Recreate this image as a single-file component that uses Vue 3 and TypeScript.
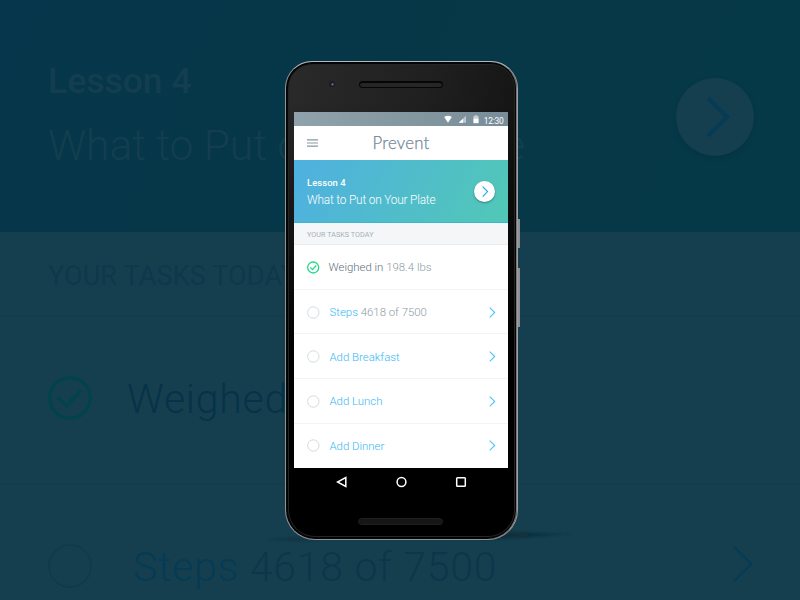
<script setup lang="ts">
interface Task {
  label: string
  detail?: string
  done?: boolean
}

const lesson = { number: 'Lesson 4', title: 'What to Put on Your Plate' }
const tasks: Task[] = [
  { label: 'Weighed in', detail: '198.4 lbs', done: true },
  { label: 'Steps', detail: '4618 of 7500' },
  { label: 'Add Breakfast' },
  { label: 'Add Lunch' },
  { label: 'Add Dinner' },
]
const backdropTasks = tasks.slice(0, 2)
</script>

<template>
  <main class="stage">
    <section class="backdrop" aria-hidden="true">
      <div class="bd-lesson">
        <div class="bd-copy">
          <div class="bd-number">{{ lesson.number }}</div>
          <div class="bd-title">{{ lesson.title }}</div>
        </div>
        <div class="bd-go">
          <svg width="78" height="78" viewBox="0 0 78 78"><path d="M32 20 51 39 32 58" fill="none" stroke="#053b54" stroke-width="4.2" /></svg>
        </div>
      </div>
      <div class="bd-sub">YOUR TASKS TODAY</div>
      <div v-for="task in backdropTasks" :key="task.label" class="bd-row" :class="{ done: task.done }">
        <svg class="bd-mark" width="44" height="44" viewBox="0 0 44 44" fill="none">
          <template v-if="task.done">
            <circle cx="22" cy="22" r="20.2" stroke="#00434a" stroke-width="3.2" />
            <path d="M9.8 21.2 18.5 30 33 14.2" stroke="#00434a" stroke-width="3.2" />
          </template>
          <circle v-else cx="22" cy="22" r="21" stroke="#12384a" stroke-width="1.5" />
        </svg>
        <div class="bd-label"><span>{{ task.label }}</span> {{ task.detail }}</div>
        <svg v-if="!task.done" class="bd-chev" width="20" height="38" viewBox="0 0 20 38"><path d="M1 1.5 18.3 19 1 36.5" fill="none" stroke="#053b54" stroke-width="2.2" /></svg>
      </div>
    </section>

    <svg class="floor" width="800" height="600" viewBox="0 0 800 600">
      <defs>
        <linearGradient id="fade"><stop offset="0" stop-color="#0a2630" /><stop offset="1" stop-color="#0a2630" stop-opacity=".35" /></linearGradient>
        <filter id="soft" x="-10%" y="-60%" width="120%" height="220%"><feGaussianBlur stdDeviation="1.2" /></filter>
      </defs>
      <path d="M480 530 520 532 573 534 535 537 480 540Z" fill="url(#fade)" opacity=".8" filter="url(#soft)" />
      <path d="M266 539.5 295 537 320 541 290 541Z" fill="#0b2c39" opacity=".45" filter="url(#soft)" />
    </svg>

    <div class="device">
      <div class="phone">
        <div class="top">
          <span class="camera"></span>
          <span class="speaker"></span>
        </div>
        <div class="screen">
          <div class="status">
            <svg width="32" height="9" viewBox="0 0 32 9" fill="#fff">
              <path d="M.2 2Q4-.4 7.8 2L4 7.8Z" />
              <path d="M22 .8V7.8H14.7Z" opacity=".5" />
              <path d="M19 3.7V7.8H14.7Z" />
            </svg>
            <svg class="battery" width="6" height="9" viewBox="0 0 6 9" fill="#fff"><path d="M1.7.3H4.3V1.3H5.6V3.4H.4V1.3H1.7Z" opacity=".6" /><path d="M.4 3.4H5.6V8.2H.4Z" /></svg>
            <span class="clock">12:30</span>
          </div>
          <div class="appbar">
            <svg class="menu" width="11" height="8" viewBox="0 0 11 8"><path d="M0 .8H11M0 4H11M0 7.2H11" stroke="#8599a4" stroke-width="1.2" /></svg>
            <span class="brand">Prevent</span>
          </div>
          <div class="lesson">
            <div>
              <div class="number">{{ lesson.number }}</div>
              <div class="title">{{ lesson.title }}</div>
            </div>
            <div class="go">
              <svg width="21" height="21" viewBox="0 0 21 21"><path d="M8.7 5.6 13.5 10.6 8.7 15.6" fill="none" stroke="#22adf0" stroke-width="1.2" /></svg>
            </div>
          </div>
          <div class="sub">YOUR TASKS TODAY</div>
          <div class="list">
            <div v-for="task in tasks" :key="task.label" class="row" :class="{ done: task.done }">
              <svg class="mark" width="13" height="13" viewBox="0 0 13 13" fill="none">
                <template v-if="task.done">
                  <circle cx="6.2" cy="6.5" r="5.5" stroke="#1edb86" stroke-width="1.3" />
                  <path d="M3.3 6.4 5.5 8.6 9.3 4.5" stroke="#1edb86" stroke-width="1.3" />
                </template>
                <circle v-else cx="6.3" cy="6.5" r="5.7" stroke="#d3dbe0" stroke-width="1" />
              </svg>
              <div class="label"><span>{{ task.label }}</span> {{ task.detail }}</div>
              <svg v-if="!task.done" class="chev" width="7" height="11" viewBox="0 0 7 11"><path d="M.7.7 5.7 5.5 .7 10.3" fill="none" stroke="#4cc3f7" stroke-width="1.1" /></svg>
            </div>
          </div>
        </div>
        <div class="nav">
          <svg width="12" height="12" viewBox="0 0 12 12"><path d="M9.8 1.5V10.5L1.4 6Z" /></svg>
          <svg width="12" height="12" viewBox="0 0 12 12"><circle cx="5.5" cy="6" r="4.4" /></svg>
          <svg width="12" height="12" viewBox="0 0 12 12"><rect x="1.7" y="1.7" width="8.6" height="8.6" rx=".8" /></svg>
        </div>
        <div class="bottom"><span class="speaker"></span></div>
      </div>
      <div class="keys"><span class="power"></span><span class="volume"></span></div>
    </div>
  </main>
</template>

<style>
body { margin: 0; background: #153f4f; }
</style>

<style scoped>
.stage {
  display: grid;
  width: 800px;
  height: 600px;
  overflow: hidden;
  font-family: Roboto, "Liberation Sans", sans-serif;
  white-space: nowrap;
}
.stage > * { grid-area: 1 / 1; }
svg { display: block; flex: none; }

.backdrop { background: #153f4f; height: 600px; overflow: hidden; }
.bd-lesson {
  box-sizing: border-box;
  height: 232px;
  padding: 0 46px 0 48px;
  display: flex;
  justify-content: space-between;
  background: linear-gradient(115deg, #05364b, #063847 60%, #063947);
}
.bd-copy { color: #143e50; padding-top: 60px; width: 600px; }
.bd-number { font-size: 35.5px; line-height: 42px; font-weight: 500; letter-spacing: 0; }
.bd-title { font-size: 42.5px; line-height: 50px; margin-top: 19px; font-weight: 300; letter-spacing: 0; }
.bd-go {
  width: 78px;
  height: 78px;
  margin-top: 78px;
  border-radius: 50%;
  background: #153f4f;
  box-shadow: 0 2px 4px rgba(2, 40, 54, 0.3);
}
.bd-sub {
  box-sizing: border-box;
  height: 84px;
  padding-left: 48px;
  border-bottom: 1px solid #133b4c;
  line-height: 88px;
  font-size: 27px;
  font-weight: 450;
  color: #0e384c;
  letter-spacing: 0.15px;
}
.bd-row {
  box-sizing: border-box;
  height: 168px;
  padding: 0 47px 3px 48px;
  display: flex;
  align-items: center;
  border-bottom: 1px solid #133b4c;
}
.bd-label { flex: 1; margin-left: 41px; font-size: 41px; line-height: 50px; font-weight: 300; color: #0d364b; letter-spacing: 0.75px; padding-top: 1px; }
.bd-chev { margin-bottom: 4px; }
.bd-row.done .bd-label { margin-left: 35px; }
.bd-label span { color: #053b54; }
.bd-row.done .bd-label span { color: #063349; }

.device { display: flex; align-items: flex-start; padding: 61px 0 0 285px; z-index: 1; }
.floor { z-index: 0; }
.phone {
  box-sizing: border-box;
  width: 233px;
  height: 479px;
  border: 1px solid #999;
  border-color: #b5b8ba #a19ea1 #8f9294 #8c9496;
  border-radius: 27px 27px 30px 30px;
  padding: 0 9px 0 8px;
  background: linear-gradient(180deg, transparent 8%, #000 62%), linear-gradient(100deg, #2a2a2a, #202020 45%, #0d0d0d);
  box-shadow: inset -1px 0 0 #777, inset 0 0 0 2px #050505, inset 0 0 0 3px #242424;
}
.top { height: 50px; display: flex; }
.camera { width: 4px; height: 4px; margin: 20px 0 0 36px; border-radius: 50%; background: radial-gradient(circle at 65% 60%, #9080a8 0, #2a2036 45%, #15101c 100%); box-shadow: 0 0 0 1px #1d1b1f; }
.speaker { box-sizing: border-box; width: 84px; height: 7px; border-radius: 4px; background: #262626; border: 1.5px solid #060606; border-top-width: 2px; }
.top .speaker { margin: 19px 0 0 25px; }
.screen { height: 356px; width: 214px; background: #fff; overflow: hidden; }
.status {
  height: 14px;
  display: flex;
  align-items: center;
  justify-content: flex-end;
  padding-right: 4.5px;
  background: linear-gradient(100deg, #90a2ab, #8397a1 55%, #788d98);
  color: #fff;
}
.status svg { margin-top: 1px; }
.status .battery { margin-left: -3px; }
.clock { margin-left: 4.5px; font-size: 8.4px; line-height: 14px; font-weight: 400; letter-spacing: -0.2px; padding-top: 3px; }
.appbar { height: 34.4px; display: grid; grid-template-columns: 1fr auto 1fr; align-items: center; }
.menu { margin-left: 13px; }
.brand { font-family: Lato, sans-serif; font-size: 16.8px; line-height: 20px; font-weight: 300; color: #71889a; letter-spacing: 0.25px; -webkit-text-stroke: 0.25px #71889a; }
.lesson {
  box-sizing: border-box;
  height: 62.4px;
  padding: 1px 13px 0;
  display: flex;
  justify-content: space-between;
  align-items: center;
  color: #fff;
  background: linear-gradient(118deg, #4fb1df 5%, #50bccb 50%, #51c7b8 95%);
  border-bottom: 1px solid #3bb7cd;
}
.number { font-size: 9.4px; line-height: 12px; font-weight: 500; letter-spacing: 0.1px; margin-top: 1px; }
.title { font-size: 11.9px; line-height: 16px; font-weight: 300; margin-top: 3px; letter-spacing: -0.2px; }
.go { width: 21px; height: 21px; border-radius: 50%; background: #fff; box-shadow: 0 1px 2px rgba(20, 80, 90, 0.6); }
.sub {
  box-sizing: border-box;
  height: 22.5px;
  padding-left: 13px;
  background: #f4f6f8;
  border-bottom: 1px solid #e9edef;
  font-size: 7.2px;
  line-height: 23.5px;
  color: #a3b1b9;
  letter-spacing: 0.05px;
}
.row {
  box-sizing: border-box;
  height: 44.6px;
  padding: 1px 12.5px 0;
  display: flex;
  align-items: center;
  border-bottom: 1px solid #f3f4f5;
}
.row.done { padding-top: 0; }
.row:last-child { border-bottom: 0; padding-top: 0; }
.label { flex: 1; margin-left: 10px; font-size: 11.4px; line-height: 14px; font-weight: 300; color: #8b9ca6; letter-spacing: 0; }
.label span { color: #36b8f5; }
.done .label { margin-left: 9px; }
.done .label span { color: #5b6f7a; }
.nav { height: 28px; padding: 0 41px 0 42px; display: flex; justify-content: space-between; align-items: center; background: #000; }
.nav svg { fill: none; stroke: #fff; stroke-width: 1.5; }
.bottom { padding: 22px 0 0 64px; display: flex; }
.bottom .speaker { width: 85px; background: #161616; border-color: #1f1f1f; border-width: 1px; }
.keys { display: flex; flex-direction: column; gap: 20px; padding-top: 158px; }
.keys span { width: 2px; background: #8d8f94; }
.power { height: 29px; }
.volume { height: 59px; }
</style>
